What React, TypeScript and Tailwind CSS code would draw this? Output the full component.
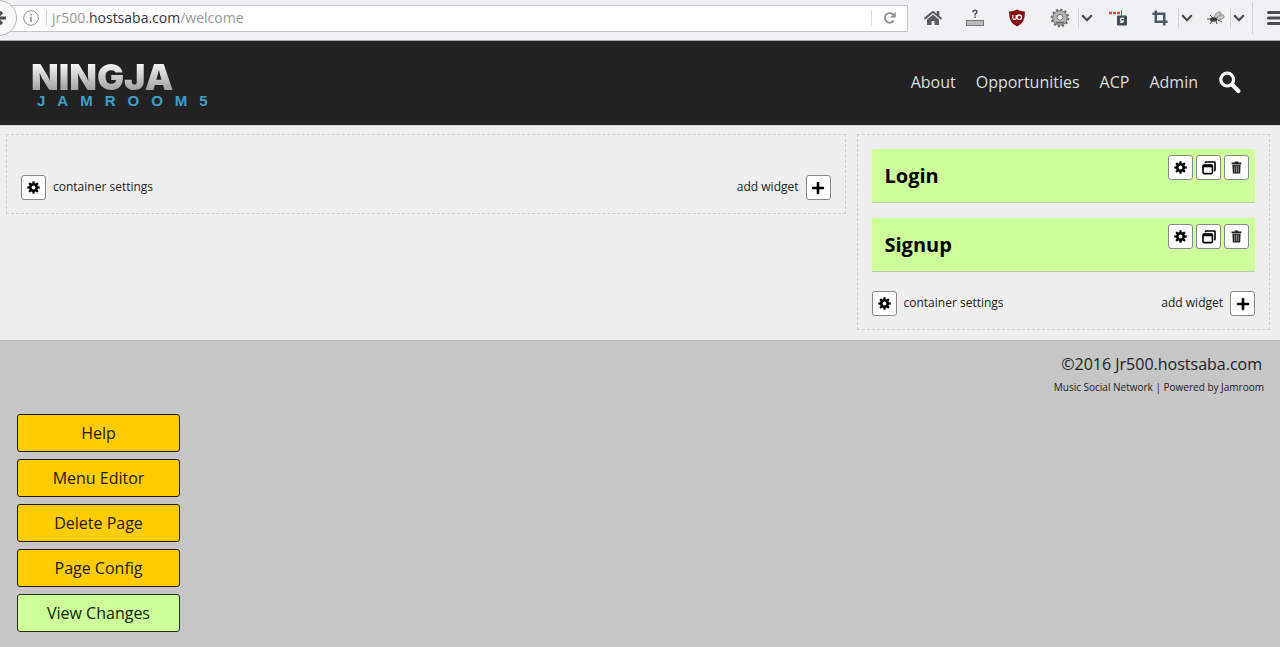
import type { ReactNode } from "react";
import { FaHome, FaPlus } from "react-icons/fa";

const navLinks = ["About", "Opportunities", "ACP", "Admin"];
const widgets = ["Login", "Signup"];
const adminButtons = ["Help", "Menu Editor", "Delete Page", "Page Config"];
const teeth = [0, 45, 90, 135, 180, 225, 270, 315];

function GearIcon() {
  return (
    <svg viewBox="0 0 14 14" className="size-[13px]" aria-hidden="true">
      <circle cx="7" cy="7" r="3.5" fill="none" stroke="currentColor" strokeWidth="2.8" />
      {teeth.map((angle) => (
        <rect key={angle} x="5.8" y="0.3" width="2.4" height="2.6" fill="currentColor" transform={`rotate(${angle} 7 7)`} />
      ))}
    </svg>
  );
}

function CloneIcon() {
  return (
    <svg viewBox="0 0 14 14" className="size-[14px]" fill="none" stroke="currentColor" aria-hidden="true">
      <path d="M3.5 2.2V1.6Q3.5 1 4.1 1H12.4Q13 1 13 1.6V9Q13 9.6 12.4 9.6H12" strokeWidth="1.6" />
      <rect x="1" y="4" width="9.4" height="8.6" rx="1" strokeWidth="1.6" />
      <path d="M1 5H10.4" strokeWidth="2.6" />
    </svg>
  );
}

function TrashIcon() {
  return (
    <svg viewBox="0 0 12 14" className="h-[13px] w-[11px]" aria-hidden="true">
      <path d="M4 1.5V0.5H8V1.5H11.4V3.4H0.6V1.5ZM1.5 4H10.5L10 13.5H2Z" fill="#222" />
      <path d="M4 5V12.4M6 5V12.4M8 5V12.4" stroke="#aaa" strokeWidth="0.8" />
    </svg>
  );
}

function SearchIcon() {
  return (
    <svg viewBox="0 0 24 24" className="size-6" fill="none" stroke="currentColor" aria-hidden="true">
      <circle cx="9.2" cy="9.6" r="6.4" strokeWidth="3.2" />
      <path d="M14.2 14.8L20.4 21" strokeWidth="4.2" strokeLinecap="round" />
    </svg>
  );
}

function ReloadIcon() {
  return (
    <svg viewBox="0 0 14 14" className="size-[14px]" fill="none" stroke="#8b8f9a" aria-hidden="true">
      <path d="M10.6 9.6A4.8 4.8 0 1 1 10.4 3.9" strokeWidth="1.9" />
      <path d="M12.8 0.8V6.4H7.2Z" fill="#8b8f9a" stroke="none" />
    </svg>
  );
}

function KeypadIcon() {
  return (
    <svg viewBox="0 0 20 20" className="size-5" fill="none" aria-hidden="true">
      <path d="M8 4.2Q8 2.2 10 2.2T12 4Q12 5.2 10 6.4V7.4M10 8.6V10" stroke="#555" strokeWidth="1.5" />
      <rect x="1.5" y="12.5" width="17" height="5" fill="#bbb" stroke="#777" />
    </svg>
  );
}

function ShieldIcon() {
  return (
    <svg viewBox="0 0 18 18" className="size-[18px]" fill="none" aria-hidden="true">
      <path d="M9 0.5Q12.5 2.6 16.8 2.6Q17.6 13.5 9 17.6Q0.4 13.5 1.2 2.6Q5.5 2.6 9 0.5Z" fill="#860d12" />
      <path d="M4.8 6V8.8Q4.8 10.4 6.4 10.4T8.2 8.8V6" stroke="#fff" strokeWidth="1.3" />
      <circle cx="11.3" cy="8.2" r="2.2" stroke="#fff" strokeWidth="1.3" />
    </svg>
  );
}

function CogWheelIcon() {
  return (
    <svg viewBox="0 0 20 20" className="size-5" fill="none" aria-hidden="true">
      <circle cx="10" cy="10" r="8.4" stroke="#666" strokeWidth="1.8" strokeDasharray="2.2 2.2" />
      <circle cx="10" cy="10" r="5.4" stroke="#b5b5b5" strokeWidth="4" />
      <circle cx="10" cy="10" r="7.3" stroke="#666" strokeWidth="0.9" />
      <circle cx="10" cy="9.4" r="3" fill="#eee" stroke="#666" />
      <path d="M6 14.6H14" stroke="#666" strokeWidth="1.8" />
    </svg>
  );
}

function PasswordIcon() {
  return (
    <svg viewBox="0 0 20 18" className="h-[18px] w-5" fill="none" aria-hidden="true">
      <path d="M1 4H4M5 4H8M9 4H12" stroke="#d9434b" strokeWidth="2.4" />
      <path d="M13.5 1V7" stroke="#d9434b" />
      <rect x="9" y="6.5" width="10" height="10" rx="1" fill="#414b55" />
      <path d="M16 9.4Q12.6 8.6 12.6 10.4T15.4 12Q15.4 13.8 12 13.2" stroke="#fff" strokeWidth="1.2" />
    </svg>
  );
}

function CropToolIcon() {
  return (
    <svg viewBox="0 0 18 18" className="size-[18px]" fill="none" stroke="#4d5a66" strokeWidth="2.6" aria-hidden="true">
      <path d="M1.4 4.8H13.2V16.6M4.8 1.4V12.8H16.6" />
    </svg>
  );
}

function BugIcon() {
  return (
    <svg viewBox="0 0 20 18" className="h-[18px] w-5" fill="none" aria-hidden="true">
      <path d="M8 9Q10 2 14 3T9 10Q17 3 18 7T9 11" fill="#c4c4c4" stroke="#888" strokeWidth="0.8" />
      <path d="M7 9L4 6M5 10H1M6 12L4 15M10 12L11 15M12 11L16 13" stroke="#444" strokeWidth="0.9" />
      <ellipse cx="7.6" cy="10.4" rx="3.6" ry="2.2" fill="#3b3b3b" />
    </svg>
  );
}

function ToolbarArrow({ label }: { label: string }) {
  return (
    <button aria-label={label} className="flex h-5 w-4 shrink-0 items-center justify-center border-l border-[#d2d2d5]">
      <svg viewBox="0 0 12 8" className="h-2 w-3" fill="none" stroke="#444" strokeWidth="2" aria-hidden="true">
        <path d="M1.2 1.2L6 6.2L10.8 1.2" />
      </svg>
    </button>
  );
}

function IconButton({ label, children }: { label: string; children: ReactNode }) {
  return (
    <button
      aria-label={label}
      className="flex size-[25px] shrink-0 items-center justify-center rounded-[3px] border border-[#888] bg-white text-black"
    >
      {children}
    </button>
  );
}

function BrowserBar() {
  return (
    <div className="flex h-[41px] items-center overflow-hidden border-b border-[#aaa] bg-[#f0f1f3] pb-1">
      <button
        aria-label="Back"
        className="z-10 -ml-[19px] flex size-9 shrink-0 items-center justify-center rounded-full border border-[#b5b5b8] bg-[#f9f9fa]"
      >
        <svg viewBox="0 0 18 18" className="size-[18px]" fill="none" stroke="#4c4c4f" strokeWidth="3.2" aria-hidden="true">
          <path d="M12 3L6 9L12 15M6 9H16" />
        </svg>
      </button>
      <div className="-ml-2 flex h-[27px] min-w-0 flex-1 items-center border border-[#c5c5c8] bg-white pl-[13px]">
        <svg viewBox="0 0 16 16" className="size-4 shrink-0" fill="none" stroke="#8d8d8d" aria-hidden="true">
          <circle cx="8" cy="8" r="7.3" />
          <path d="M8 3.8V5.4M8 6.8V12" strokeWidth="1.6" />
        </svg>
        <a
          href="#welcome"
          className="ml-[7px] flex-1 border-l border-[#ccc] pl-[5px] text-sm leading-4 text-[#999]"
        >
          jr500.<span className="text-[#333]">hostsaba.com</span>/welcome
        </a>
        <button aria-label="Reload" className="flex h-4 w-9 items-center justify-center border-l border-[#ddd]">
          <ReloadIcon />
        </button>
      </div>
      <div className="flex shrink-0 items-center pl-1">
        <button aria-label="Home" className="flex w-[42px] justify-center text-[#5a5a5c]">
          <FaHome size={18} />
        </button>
        <button aria-label="Keypad" className="flex w-[42px] justify-center">
          <KeypadIcon />
        </button>
        <button aria-label="Ad blocker" className="flex w-[42px] justify-center">
          <ShieldIcon />
        </button>
        <button aria-label="Settings" className="flex w-10 justify-center pl-1">
          <CogWheelIcon />
        </button>
        <ToolbarArrow label="Settings menu" />
        <button aria-label="Passwords" className="flex w-12 justify-center">
          <PasswordIcon />
        </button>
        <button aria-label="Crop" className="flex w-9 justify-center">
          <CropToolIcon />
        </button>
        <ToolbarArrow label="Crop menu" />
        <button aria-label="Debug" className="flex w-9 justify-center pl-2">
          <BugIcon />
        </button>
        <ToolbarArrow label="Debug menu" />
        <button
          aria-label="Open menu"
          className="ml-[6px] flex h-8 w-7 items-center overflow-hidden border-l border-[#d2d2d5] pl-[14px]"
        >
          <svg viewBox="0 0 18 16" className="h-4 w-[18px] shrink-0" stroke="#4c4c4f" strokeWidth="3" strokeLinecap="round" aria-hidden="true">
            <path d="M1.5 2.5H16.5M1.5 8H16.5M1.5 13.5H16.5" />
          </svg>
        </button>
      </div>
    </div>
  );
}

function ContainerTools() {
  return (
    <div className="flex items-center justify-between text-xs leading-4 text-[#222]">
      <div className="flex items-center gap-[7px]">
        <IconButton label="Container settings">
          <GearIcon />
        </IconButton>
        <span className="pb-[2px]">container settings</span>
      </div>
      <div className="flex items-center gap-[7px]">
        <span className="pb-[2px]">add widget</span>
        <IconButton label="Add widget">
          <FaPlus size={14} />
        </IconButton>
      </div>
    </div>
  );
}

function Widget({ title }: { title: string }) {
  return (
    <section className="mb-[15px] flex h-[54px] items-start justify-between border-b border-[#b9c9a9] bg-[#ccff99] pt-[6px] pr-[6px] pl-[13px]">
      <h2 className="self-center pb-[6px] text-xl leading-6 font-bold text-black">{title}</h2>
      <div className="flex gap-[3px]">
        <IconButton label={`${title} settings`}>
          <GearIcon />
        </IconButton>
        <IconButton label={`Clone ${title}`}>
          <CloneIcon />
        </IconButton>
        <IconButton label={`Delete ${title}`}>
          <TrashIcon />
        </IconButton>
      </div>
    </section>
  );
}

export default function App() {
  return (
    <div className="flex min-h-screen flex-col bg-[#eee] font-['Open_Sans','Noto_Sans',sans-serif]">
      <BrowserBar />

      <header className="flex h-[84px] items-center justify-between bg-[#222] pr-[38px] pl-[31px]">
        <a href="#home" className="flex flex-col pt-1">
          <span className="bg-linear-to-b from-white to-[#999] bg-clip-text font-['Inter',sans-serif] text-4xl leading-8 font-black text-transparent">
            NINGJA
          </span>
          <span className="pl-[6px] font-['Liberation_Sans',sans-serif] text-[15px] leading-4 font-bold tracking-[12px] text-[#3f9fc8]">
            JAMROOM5
          </span>
        </a>
        <nav className="flex items-center gap-5 pb-[2px] text-base leading-5 text-[#ddd]">
          {navLinks.map((link) => (
            <a key={link} href={`#${link.toLowerCase()}`}>
              {link}
            </a>
          ))}
          <button aria-label="Search" className="text-white">
            <SearchIcon />
          </button>
        </nav>
      </header>

      <main className="grid grid-cols-[67fr_33fr] items-start gap-[11px] border-t border-[#d0d0d0] pt-2 pr-[10px] pb-[10px] pl-[6px]">
        <div className="border border-dashed border-[#ccc] px-[14px] pt-10 pb-[13px]">
          <ContainerTools />
        </div>
        <div className="border border-dashed border-[#ccc] px-[14px] pt-[14px] pb-[13px]">
          {widgets.map((title) => (
            <Widget key={title} title={title} />
          ))}
          <div className="pt-1">
            <ContainerTools />
          </div>
        </div>
      </main>

      <footer className="flex-1 border-t border-[#bbb] bg-[#c6c6c6] pt-[10px]">
        <div className="pr-4 text-right text-[#222]">
          <p className="pr-[2px] text-base leading-[26px]">©2016 Jr500.hostsaba.com</p>
          <p className="text-[10px] leading-5">
            <a href="#network">Music Social Network</a> | <a href="#jamroom">Powered by Jamroom</a>
          </p>
        </div>
        <div className="mt-[17px] ml-[17px] flex w-[163px] flex-col gap-[7px] pb-3">
          {adminButtons.map((label) => (
            <button key={label} className="h-[38px] rounded-[3px] border border-[#221a00] bg-[#ffcc00] text-base text-[#221a00]">
              {label}
            </button>
          ))}
          <button className="h-[38px] rounded-[3px] border border-[#223311] bg-[#ccff99] text-base text-[#112200]">
            View Changes
          </button>
        </div>
      </footer>
    </div>
  );
}
